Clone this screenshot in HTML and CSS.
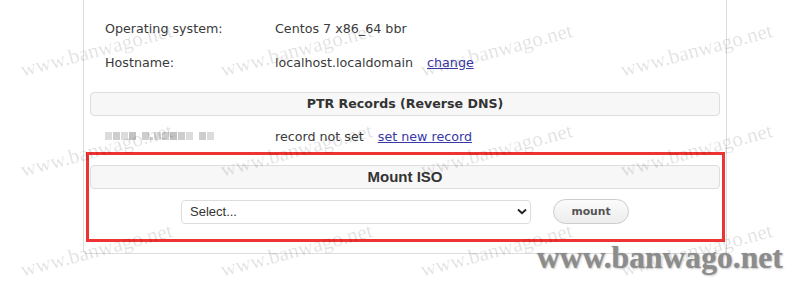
FILE: index.html
```html
<!DOCTYPE html>
<html><head><meta charset="UTF-8">
  <title>Server info</title>
  <link rel="stylesheet" href="styles.css">
</head>
<body>
<div class="panel">
  <div class="row"><span class="label">Operating system:</span><span>Centos 7 x86_64 bbr</span></div>
  <div class="row"><span class="label">Hostname:</span><span>localhost.localdomain</span><a class="act" href="#">change</a></div>
  <h3 class="bar">PTR Records (Reverse DNS)</h3>
  <div class="row row-ptr">
    <span class="label"><span class="mosaic"><i class="m2"></i><i class="m1"></i><i class="m2"></i><i class="m3"></i><i class="gap"></i><i class="m1"></i><i class="dot"></i><i class="m2"></i><i class="m1"></i><i class="m3"></i><i class="m1"></i><i class="m2"></i><i class="gap"></i><i class="m1"></i><i class="m2"></i></span></span>
    <span>record not set</span><a class="act" href="#">set new record</a>
  </div>
  <div class="mark">
    <h3 class="bar bar-iso">Mount ISO</h3>
    <form class="iso" onsubmit="return false">
      <div class="pick">
        <select><option>Select...</option></select>
        <svg class="chev" width="10" height="7" viewBox="0 0 10 7"><path d="M1 1.5 L5 5.2 L9 1.5" fill="none" stroke="#222" stroke-width="1.9"/></svg>
      </div>
      <button type="button">mount</button>
    </form>
  </div>
</div>

<div class="wm">
  <span class="w r1 c1">www.banwago.net</span><span class="w r1 c2">www.banwago.net</span><span class="w r1 c3">www.banwago.net</span><span class="w r1 c4">www.banwago.net</span>
  <span class="w r2 c1">www.banwago.net</span><span class="w r2 c2">www.banwago.net</span><span class="w r2 c3">www.banwago.net</span><span class="w r2 c4">www.banwago.net</span>
  <span class="w r3 c1">www.banwago.net</span><span class="w r3 c2">www.banwago.net</span><span class="w r3 c3">www.banwago.net</span><span class="w r3 c4">www.banwago.net</span>
</div>
<div class="brand">www.banwago.net</div>
</body></html>
```

FILE: styles.css
```css
*{margin:0;padding:0;box-sizing:border-box;}
body{font-family:"DejaVu Sans",Verdana,sans-serif;font-size:12.7px;color:#3a3a3a;background:#fff;width:800px;height:286px;overflow:hidden;position:relative;}
.panel{width:644px;margin-left:83px;border:1px solid #ddd;border-top:none;border-radius:0 0 4px 4px;padding:11px 6px 11px;}
.row{display:flex;align-items:center;height:34px;padding-left:15px;}
.row-ptr{height:32px;}
.label{width:170px;flex:none;}
.act{margin-left:14px;color:#3838a8;text-decoration:underline;}
.bar{height:24px;line-height:22px;border:1px solid #ddd;border-radius:4px;background:#f7f7f7;text-align:center;font-size:12.6px;font-weight:bold;color:#333;margin:13px 0 4px;}
.bar-iso{margin:0;font-family:"Liberation Sans",Arial,sans-serif;font-size:15px;}
.mosaic{display:flex;align-items:center;height:8px;}
.mosaic i{display:block;width:7px;height:8px;margin-right:1px;}
.mosaic .m1{background:#cdcdcd;}
.mosaic .m2{background:#dcdcdc;}
.mosaic .m3{background:#c2c2c2;}
.mosaic .gap{width:4px;background:none;}
.mosaic .dot{width:3px;height:3px;margin-top:5px;background:#d0d0d0;}
.mark{margin:0 -5px 0 -4px;border:3px solid #ee3333;padding:10px 2px 15px 1px;}
.iso{display:flex;align-items:center;justify-content:center;gap:22px;margin-top:10px;height:25px;}
.pick{position:relative;width:350px;height:24px;}
.pick select{appearance:none;-webkit-appearance:none;width:100%;height:24px;border:1px solid #ddd;border-radius:4px;background:#fff;padding-left:8px;font-family:"Liberation Sans",Arial,sans-serif;font-size:13px;color:#333;}
.chev{position:absolute;right:4px;top:8px;}
.iso button{width:76px;height:25px;border:1px solid #ccc;border-radius:13px;background:linear-gradient(#fbfbfb,#ededed);font-family:"DejaVu Sans",Verdana,sans-serif;font-weight:bold;font-size:10.8px;color:#555;}
.wm{position:absolute;left:0;top:0;width:800px;height:286px;pointer-events:none;overflow:hidden;}
.w{position:absolute;font-family:"Liberation Serif","Times New Roman",serif;font-size:21px;line-height:21px;color:rgba(0,0,0,0.12);white-space:nowrap;transform-origin:0 17.6px;transform:rotate(-15deg);}
.r1{top:60px;}
.r2{top:160px;}
.r3{top:260px;}
.c1{left:23px;}
.c2{left:223px;}
.c3{left:423px;}
.c4{left:623px;}
.brand{position:absolute;left:537px;top:242px;font-family:"Liberation Serif","Times New Roman",serif;font-weight:bold;font-size:31.6px;line-height:31px;color:#8c8c8c;text-shadow:0 0 1px #bbb,1px 1px 2px #ccc;white-space:nowrap;}
```
